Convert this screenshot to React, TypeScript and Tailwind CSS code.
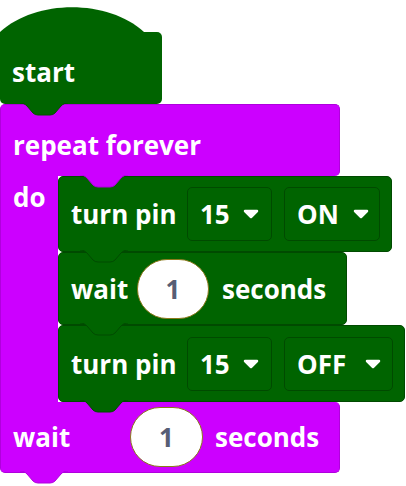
import * as React from "react";

const font = "font-['Open_Sans',sans-serif] font-bold text-[26px] leading-none text-white";

// the connection tab that hangs under a block and fills the notch of the next one
function Tab({ fill, stroke, left }: { fill: string; stroke: string; left: number }) {
  const d = "M0 0 C3 0 5 1 7 3 L13 10 Q15 12 18 12 L30 12 Q33 12 35 10 L41 3 C43 1 45 0 48 0";
  return (
    <svg
      width="48"
      height="13"
      viewBox="0 0 48 13"
      className="absolute top-full z-10 -mt-px"
      style={{ left }}
      aria-hidden
    >
      <path d={d + " Z"} fill={fill} />
      <path d={d} fill="none" stroke={stroke} strokeWidth="1" />
    </svg>
  );
}

function Caret() {
  return (
    <svg width="16" height="10" viewBox="0 0 16 10" aria-hidden>
      <path d="M2 2 L14 2 L8 8 Z" fill="white" stroke="white" strokeWidth="2.5" strokeLinejoin="round" />
    </svg>
  );
}

function Dropdown({ value, width, gap }: { value: string; width: string; gap: string }) {
  return (
    <div
      className={`flex h-[54px] items-center rounded-[5px] border border-[#004a00] pl-[12px] ${width} ${gap}`}
    >
      <span className={font}>{value}</span>
      <Caret />
    </div>
  );
}

function Oval({ className }: { className?: string }) {
  return (
    <div
      className={`flex h-[60px] w-[72px] items-center justify-center rounded-full border-[1.5px] border-[#8c7a1c] bg-white ${className ?? ""}`}
    >
      <span className="font-['Open_Sans',sans-serif] text-[26px] font-bold leading-none text-[#575e75]">1</span>
    </div>
  );
}

function TurnPin({ state, height, stateWidth, stateGap }: { state: string; height: string; stateWidth: string; stateGap: string }) {
  return (
    <div
      className={`relative flex items-center rounded-[5px] border border-[#004a00] bg-[#006400] pl-[12px] ${height} ${
        state === "ON" ? "w-[334px]" : "w-[347px]"
      }`}
    >
      <span className={`${font} w-[116px] shrink-0`}>turn pin</span>
      <Dropdown value="15" width="w-[85px]" gap="gap-[13px]" />
      <div className="w-[12px]" />
      <Dropdown value={state} width={stateWidth} gap={stateGap} />
      <Tab fill="#006400" stroke="#004a00" left={21} />
    </div>
  );
}

export default function App() {
  return (
    <div className="min-h-[486px] w-[406px] bg-white pt-[7px]">
      {/* start (hat block) */}
      <div className="flex flex-col">
        <svg width="144" height="26" viewBox="0 0 144 26" className="-mb-px block" aria-hidden>
          <path d="M0 26 L0 25 C36 -8 108 -8 144 25 L144 26 Z" fill="#006400" />
        </svg>
        <div className="relative flex h-[72px] w-[162px] items-center rounded-[5px] rounded-tl-none bg-[#006400] pl-[12px] pt-[8px]">
          <span className={font}>start</span>
          <Tab fill="#006400" stroke="#005000" left={20} />
        </div>
      </div>

      {/* repeat forever */}
      <div className="flex flex-col items-start">
        <div className="relative flex h-[72px] w-[340px] items-center rounded-[5px] rounded-bl-none border border-b-0 border-[#b000dd] bg-[#cc00ff] pl-[12px] pt-[8px]">
          <span className={font}>repeat forever</span>
          <Tab fill="#cc00ff" stroke="#b000dd" left={79} />
        </div>
        <div className="flex">
          <div className="w-[58px] self-stretch border-l border-[#b000dd] bg-[#cc00ff] pl-[12px] pt-[8px]">
            <span className={font}>do</span>
          </div>
          <div className="flex flex-col">
            <TurnPin state="ON" height="h-[76px]" stateWidth="w-[96px]" stateGap="gap-[14px]" />
            <div className="relative flex h-[73px] w-[289px] items-center rounded-[5px] border border-[#004a00] bg-[#006400] pl-[12px]">
              <span className={`${font} w-[66px] shrink-0`}>wait</span>
              <Oval />
              <span className={`${font} ml-[13px]`}>seconds</span>
              <Tab fill="#006400" stroke="#004a00" left={21} />
            </div>
            <TurnPin state="OFF" height="h-[77px]" stateWidth="w-[109px]" stateGap="gap-[19px]" />
          </div>
        </div>
        <div className="relative flex h-[71px] w-[340px] items-center rounded-[5px] rounded-tl-none border border-t-0 border-[#b000dd] bg-[#cc00ff] pl-[12px]">
          <span className={`${font} w-[117px] shrink-0`}>wait</span>
          <Oval className="w-[73px]" />
          <span className={`${font} ml-[12px]`}>seconds</span>
          <Tab fill="#cc00ff" stroke="#b000dd" left={19} />
        </div>
      </div>
    </div>
  );
}
